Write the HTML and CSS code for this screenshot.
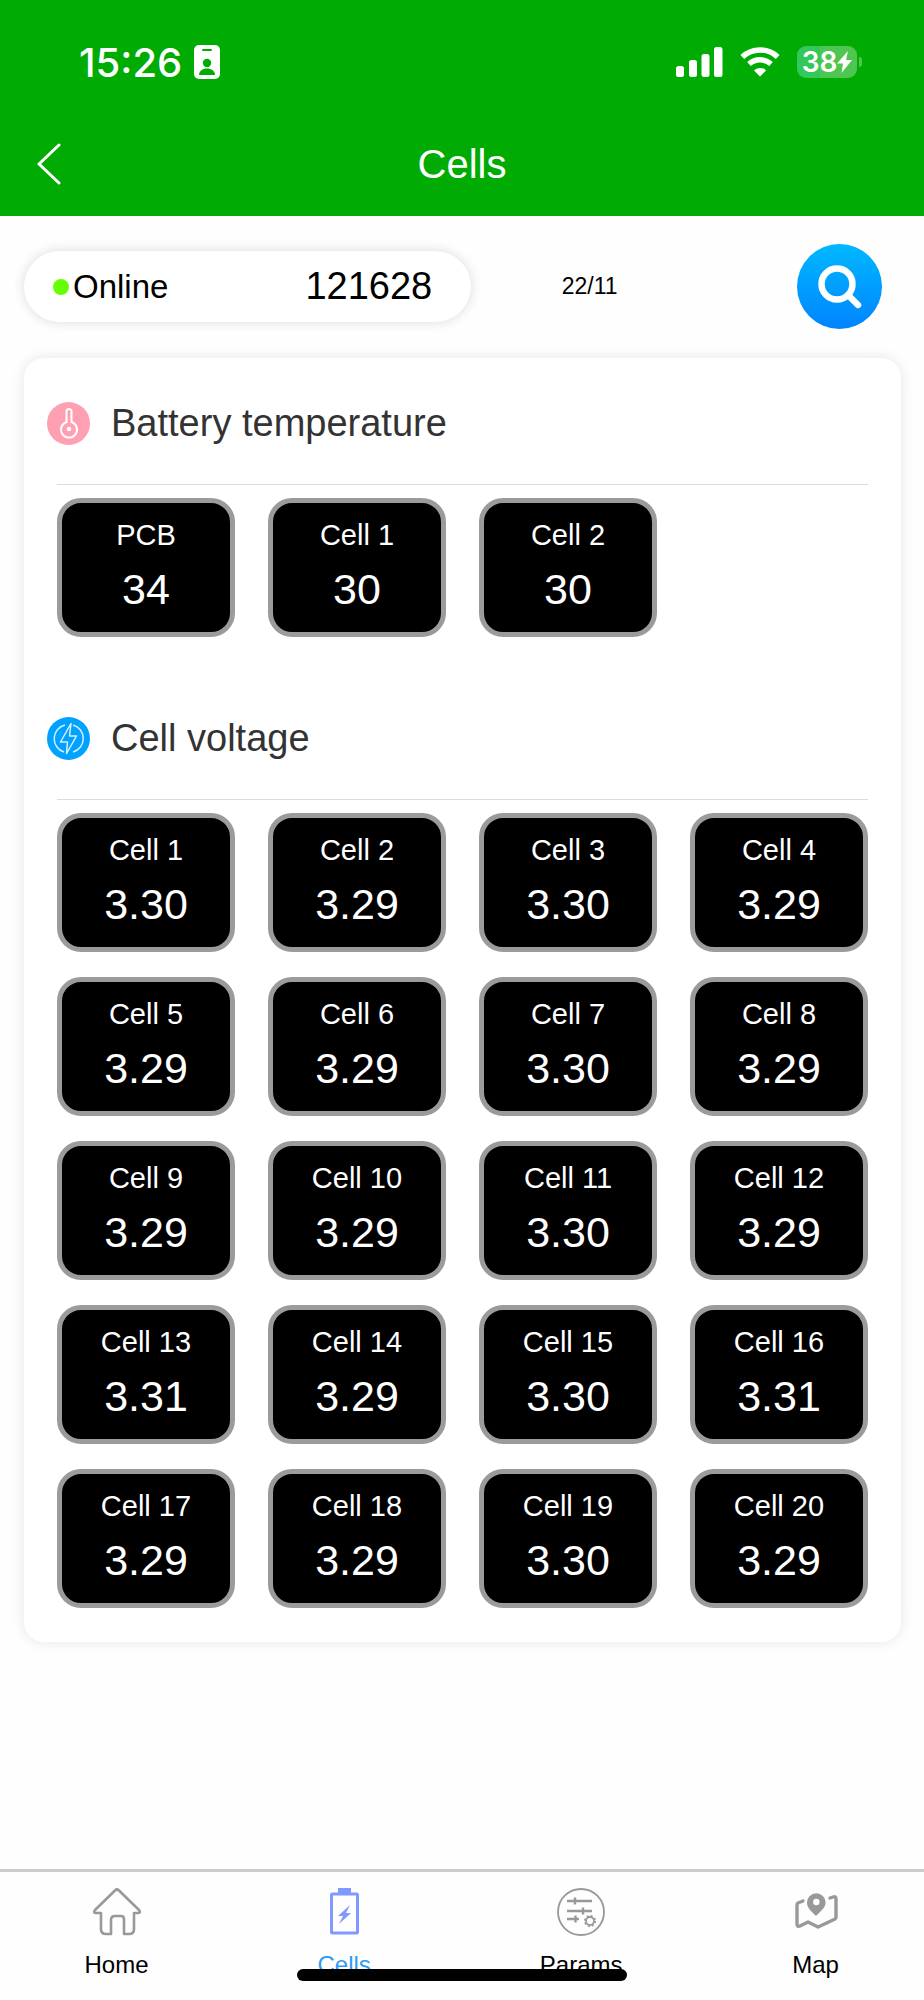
FILE: index.html
```html
<!DOCTYPE html>
<html lang="en">
<head>
    <meta charset="UTF-8">
    <meta name="viewport" content="width=device-width, initial-scale=1.0">
    <title>Cells</title>
    <link rel="stylesheet" href="styles.css">
</head>
<body>
    <header class="header">
        <div class="status-bar">
            <div class="status-left">
                <span class="clock">15:26</span>
                <svg class="badge-icon" width="26" height="34" viewBox="0 0 26 34">
                    <rect width="26" height="34" rx="5" fill="#fff"/>
                    <rect x="8" y="4" width="10" height="2" rx="1" fill="#00ab03"/>
                    <circle cx="13" cy="18" r="4.2" fill="#00ab03"/>
                    <path d="M5 30c0-4 3.500-6.500 8-6.500s8 2.500 8 6.500z" fill="#00ab03"/>
                </svg>
            </div>
            <div class="status-right">
                <svg width="47" height="30" viewBox="0 0 47 30" fill="#fff">
                    <rect x="0" y="19" width="8" height="11" rx="2.500"/>
                    <rect x="13" y="13" width="8" height="17" rx="2.500"/>
                    <rect x="25.500" y="7" width="8" height="23" rx="2.500"/>
                    <rect x="38" y="0" width="8.500" height="30" rx="2.500"/>
                </svg>
                <svg width="40" height="30" viewBox="0 0 40 30" fill="none">
                    <path d="M2.300 10a26 26 0 0 1 35.400 0" stroke="#fff" stroke-width="5.500"/>
                    <path d="M9 17a16.500 16.500 0 0 1 22 0" stroke="#fff" stroke-width="5.500"/>
                    <path d="M20 29.500l-6-6c3-3.500 9-3.500 12 0z" fill="#fff"/>
                </svg>
                <div class="battery">
                    <div class="battery-body">
                        <span>38</span>
                        <svg width="15" height="22" viewBox="0 0 15 22"><path d="M11 0L0 12.500h6L4.500 22 15 9H9z" fill="#fff"/></svg>
                    </div>
                    <div class="battery-tip"></div>
                </div>
            </div>
        </div>
        <div class="title-bar">
            <button class="back" type="button" aria-label="Back">
                <svg width="24" height="42" viewBox="0 0 24 42"><path d="M22 2L2 21l20 19" fill="none" stroke="#fff" stroke-width="3" stroke-linecap="round" stroke-linejoin="round"/></svg>
            </button>
            <h1 class="title">Cells</h1>
        </div>
    </header>

    <main class="main">
        <form class="device-bar">
            <div class="device">
                <span class="dot"></span>
                <label class="device-status" for="deviceId">Online</label>
                <input class="device-id" id="deviceId" type="text" value="121628">
            </div>
            <span class="count">22/11</span>
            <button class="search" type="button" aria-label="Search">
                <svg width="46" height="46" viewBox="0 0 46 46" fill="none" stroke="#fff">
                    <circle cx="20" cy="20" r="15.500" stroke-width="6.500"/>
                    <path d="M31 31l10 10" stroke-width="6.500" stroke-linecap="round"/>
                </svg>
            </button>
        </form>

        <div class="card">
            <section class="section">
                <h2 class="section-title">
                    <svg width="43" height="43" viewBox="0 0 43 43" fill="none" stroke="#fff" stroke-width="2">
                        <circle cx="21.500" cy="21.500" r="21.500" fill="#ff9fb2" stroke="none"/>
                        <path d="M19.500 20V9.500a2.500 2.500 0 0 1 5 0V20a8 8 0 1 1-5 0z"/>
                        <circle cx="22" cy="27" r="2.300" fill="#fff" stroke="none"/>
                    </svg>
                    Battery temperature
                </h2>
                <ul class="tiles">
                    <li class="tile"><span class="name">PCB</span><span class="value">34</span></li>
                    <li class="tile"><span class="name">Cell 1</span><span class="value">30</span></li>
                    <li class="tile"><span class="name">Cell 2</span><span class="value">30</span></li>
                </ul>
            </section>
            <section class="section">
                <h2 class="section-title">
                    <svg width="43" height="43" viewBox="0 0 43 43" fill="none" stroke="#d6efff" stroke-width="1.500" stroke-linejoin="round">
                        <circle cx="21.500" cy="21.500" r="21.500" fill="#00a2ff" stroke="none"/>
                        <path d="M18 8a14 14 0 0 0-1 27M26 8a14 14 0 0 1 0 27"/>
                        <path d="M24 6.500L13.500 25h7l-1 11.500L29.500 19h-7z"/>
                    </svg>
                    Cell voltage
                </h2>
                <ul class="tiles">
                    <li class="tile"><span class="name">Cell 1</span><span class="value">3.30</span></li>
                    <li class="tile"><span class="name">Cell 2</span><span class="value">3.29</span></li>
                    <li class="tile"><span class="name">Cell 3</span><span class="value">3.30</span></li>
                    <li class="tile"><span class="name">Cell 4</span><span class="value">3.29</span></li>
                    <li class="tile"><span class="name">Cell 5</span><span class="value">3.29</span></li>
                    <li class="tile"><span class="name">Cell 6</span><span class="value">3.29</span></li>
                    <li class="tile"><span class="name">Cell 7</span><span class="value">3.30</span></li>
                    <li class="tile"><span class="name">Cell 8</span><span class="value">3.29</span></li>
                    <li class="tile"><span class="name">Cell 9</span><span class="value">3.29</span></li>
                    <li class="tile"><span class="name">Cell 10</span><span class="value">3.29</span></li>
                    <li class="tile"><span class="name">Cell 11</span><span class="value">3.30</span></li>
                    <li class="tile"><span class="name">Cell 12</span><span class="value">3.29</span></li>
                    <li class="tile"><span class="name">Cell 13</span><span class="value">3.31</span></li>
                    <li class="tile"><span class="name">Cell 14</span><span class="value">3.29</span></li>
                    <li class="tile"><span class="name">Cell 15</span><span class="value">3.30</span></li>
                    <li class="tile"><span class="name">Cell 16</span><span class="value">3.31</span></li>
                    <li class="tile"><span class="name">Cell 17</span><span class="value">3.29</span></li>
                    <li class="tile"><span class="name">Cell 18</span><span class="value">3.29</span></li>
                    <li class="tile"><span class="name">Cell 19</span><span class="value">3.30</span></li>
                    <li class="tile"><span class="name">Cell 20</span><span class="value">3.29</span></li>
                </ul>
            </section>
        </div>
    </main>

    <nav class="tabs">
        <a class="tab" href="#home">
            <svg width="48" height="48" viewBox="0 0 48 48" fill="none" stroke="#999" stroke-width="2.600" stroke-linejoin="round">
                <path d="M22 2.500q2-2 4 0L46 22q2 3-1 3h-4v16q0 5-5 5h-5V31q0-3-3-3h-6q-4 0-4 4v14h-5q-5 0-5-5V25H3q-3 0-1-3z"/>
            </svg>
            Home
        </a>
        <a class="tab active" href="#cells">
            <svg width="48" height="48" viewBox="0 0 48 48" fill="#8098ff">
                <path d="M18 0h13v6H18z"/>
                <rect x="11.500" y="6" width="26" height="39" rx="1" fill="none" stroke="#8098ff" stroke-width="3"/>
                <path d="M30 17L18 28h5l-4 8 12-11h-5z"/>
            </svg>
            Cells
        </a>
        <a class="tab" href="#params">
            <svg width="48" height="48" viewBox="0 0 48 48" fill="none" stroke="#999" stroke-width="2.400">
                <circle cx="24" cy="24" r="23" stroke-width="1.800"/>
                <path d="M10 13h25M10 23h25M10 31h12M18 9.500v7M26 19.500v7M18.500 27.500v7"/>
                <circle cx="33" cy="33" r="4" stroke-width="1.800"/>
                <circle cx="33" cy="33" r="5.300" stroke-width="1.500" stroke-dasharray="2.100 2.060"/>
            </svg>
            Params
        </a>
        <a class="tab" href="#map">
            <svg width="48" height="48" viewBox="0 0 48 48" fill="none" stroke="#999" stroke-width="3.400" stroke-linejoin="round" stroke-linecap="round">
                <path d="M11 13l-5 2q-1 .5-1 2v19q0 3 3 2l8-4 10 5 15-7q3-1 3-3V11q0-3-3-2l-3 1"/>
                <path d="M24 28c-5-5-9-8-9-13.500a9.300 9.300 0 0 1 18.600 0c0 5-4.600 8.500-9.600 13.500z" fill="#999" stroke="none"/>
                <circle cx="24.300" cy="14" r="3.200" fill="#fff" stroke="none"/>
            </svg>
            Map
        </a>
        <div class="home-indicator"></div>
    </nav>
</body>
</html>
```
FILE: styles.css
```css
* {
    box-sizing: border-box;
}
body {
    display: flex;
    flex-direction: column;
    min-height: 100vh;
    margin: 0;
    background-color: #fefefe;
    color: #000;
    font-family: "Liberation Sans", Arial, sans-serif;
}
svg {
    display: block;
    flex: none;
}
button {
    padding: 0;
    border: none;
    background: none;
    cursor: pointer;
}
.header {
    padding-bottom: 4px;
    background-color: #00ab03;
    color: #fff;
}
.status-bar {
    display: flex;
    justify-content: space-between;
    align-items: center;
    height: 116px;
    padding: 8px 62px 0 79px;
    font-family: Inter, sans-serif;
}
.status-left {
    display: flex;
    align-items: center;
    gap: 12px;
}
.clock {
    font-size: 40px;
    font-weight: 500;
}
.status-right {
    display: flex;
    align-items: center;
    gap: 17px;
}
.battery {
    display: flex;
    align-items: center;
    gap: 2px;
}
.battery-body {
    display: flex;
    align-items: center;
    justify-content: center;
    width: 60px;
    height: 32px;
    border-radius: 9px;
    background: linear-gradient(to right, #34c759 38%, #4fc552 38%);
    font-size: 28px;
    font-weight: 600;
}
.battery-tip {
    width: 3px;
    height: 10px;
    border-radius: 0 3px 3px 0;
    background-color: #4fc552;
}
.title-bar {
    display: grid;
    grid-template-columns: 1fr auto 1fr;
    align-items: center;
    height: 96px;
    padding: 0 37px;
}
.back {
    justify-self: start;
}
.title {
    margin: 0;
    font-size: 40px;
    font-weight: normal;
}
.main {
    padding: 28px 23px 29px 24px;
}
.device-bar {
    display: grid;
    grid-template-columns: 51% 27% 1fr;
    align-items: center;
    margin-bottom: 29px;
}
.device {
    display: flex;
    align-items: center;
    height: 71px;
    padding: 0 39px 0 29px;
    border-radius: 36px;
    background-color: #fff;
    box-shadow: 0 0 12px rgba(40, 40, 80, 0.16);
}
.dot {
    flex: none;
    width: 16px;
    height: 16px;
    margin-right: 4px;
    border-radius: 50%;
    background-color: #66ff00;
}
.device-status {
    font-size: 33px;
}
.device-id {
    flex: 1;
    min-width: 0;
    padding: 0;
    border: none;
    background: none;
    color: inherit;
    font-family: inherit;
    font-size: 38px;
    text-align: right;
}
.count {
    font-size: 23px;
    text-align: center;
}
.search {
    display: flex;
    align-items: center;
    justify-content: center;
    justify-self: end;
    width: 85px;
    height: 85px;
    margin-right: 19px;
    border-radius: 50%;
    background: linear-gradient(#00b8ff, #0084ff);
}
.card {
    border-radius: 20px;
    background-color: #fff;
    box-shadow: 0 0 14px rgba(0, 0, 0, 0.1);
}
.section {
    padding-bottom: 36px;
}
.section:last-child {
    padding-bottom: 34px;
}
.section-title {
    display: flex;
    align-items: center;
    gap: 21px;
    margin: 0;
    padding: 44px 23px 39px;
    color: #333;
    font-size: 38px;
    font-weight: normal;
    line-height: 43px;
}
.tiles {
    display: grid;
    grid-template-columns: repeat(4, 1fr);
    gap: 25px 33px;
    margin: 0 33px;
    padding: 13px 0 0;
    border-top: 1px solid #ddd;
    list-style: none;
}
.tile {
    display: flex;
    flex-direction: column;
    gap: 12px;
    padding: 15px 0 18px;
    border: 5px solid #9b9b9b;
    border-radius: 24px;
    background-color: #000;
    color: #fff;
    text-align: center;
}
.name {
    font-size: 29px;
    line-height: 34px;
}
.value {
    font-size: 43px;
    line-height: 50px;
}
.tabs {
    position: relative;
    display: flex;
    justify-content: space-around;
    margin-top: auto;
    padding: 16px 0 21px;
    border-top: 3px solid #ccc;
}
.tab {
    display: flex;
    flex-direction: column;
    align-items: center;
    gap: 15px;
    color: #000;
    font-size: 24px;
    line-height: 28px;
    text-decoration: none;
}
.tab.active {
    color: #2f9bf5;
}
.home-indicator {
    position: absolute;
    bottom: 19px;
    left: 50%;
    width: 330px;
    height: 12px;
    border-radius: 6px;
    background-color: #000;
    transform: translateX(-50%);
}
```
